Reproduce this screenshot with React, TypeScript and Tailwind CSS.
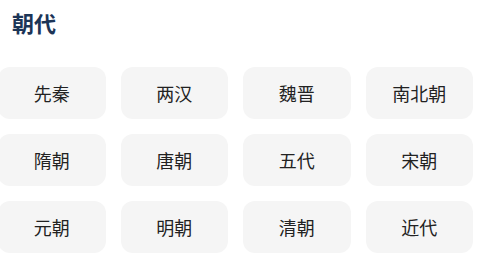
import React from "react";

const items = ["先秦", "两汉", "魏晋", "南北朝", "隋朝", "唐朝", "五代", "宋朝", "元朝", "明朝", "清朝", "近代"];

export default function App() {
  return (
    <div className="w-[480px] h-[261px] bg-white overflow-hidden" style={{ fontFamily: '"Noto Sans CJK SC", "Noto Sans", sans-serif' }}>
      <div className="pt-[9px] pl-[12px] text-[22px] leading-[26px] font-bold text-[#1c3557]">朝代</div>
      <div className="mt-[32px] ml-[-2px] w-[475px] grid grid-cols-4 gap-x-[15px] gap-y-[15px]">
        {items.map((t) => (
          <div key={t} className="h-[52px] rounded-[12px] bg-[#f5f5f5] flex items-center justify-center text-[18px] text-[#222]">
            {t}
          </div>
        ))}
      </div>
    </div>
  );
}
